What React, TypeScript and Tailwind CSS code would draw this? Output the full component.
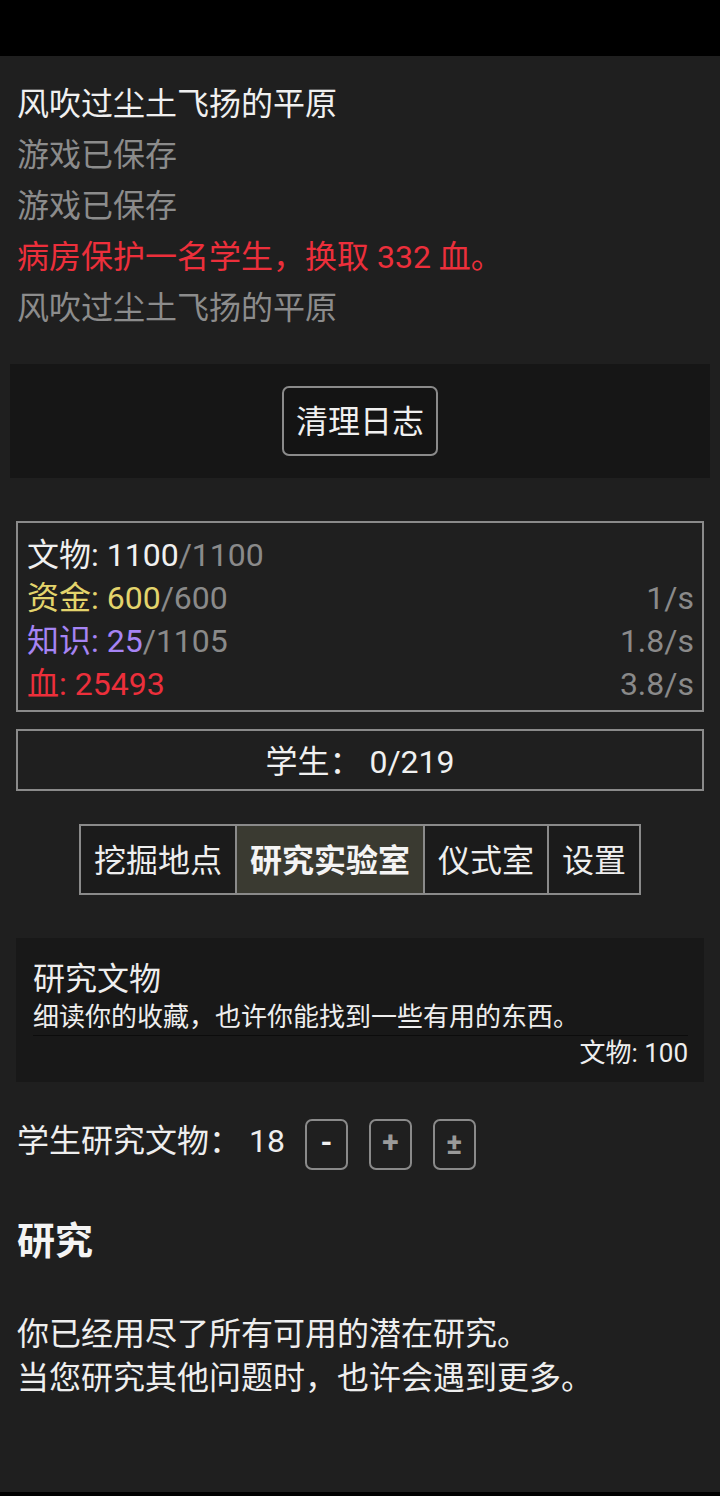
import React from "react";

const font = { fontFamily: 'Roboto, "Noto Sans CJK SC", "Noto Sans", sans-serif' };

export default function App() {
  return (
    <div className="flex h-[1496px] w-[720px] flex-col bg-black text-[#eeeeee]" style={font}>
      <div className="h-[56px] shrink-0 bg-black" />
      <div className="flex flex-1 flex-col bg-[#1f1f1f]">
        {/* log */}
        <div className="px-[17px] pt-[23px] text-[32px] leading-[51px]">
          <div className="text-[#f0f0f0]">风吹过尘土飞扬的平原</div>
          <div className="text-[#8c8c8c]">游戏已保存</div>
          <div className="text-[#8c8c8c]">游戏已保存</div>
          <div className="text-[#ec2f3b]">病房保护一名学生，换取 332 血。</div>
          <div className="text-[#8c8c8c]">风吹过尘土飞扬的平原</div>
        </div>

        {/* clear log */}
        <div className="mx-[10px] mt-[30px] flex h-[114px] items-center justify-center bg-[#161616]">
          <button className="flex h-[70px] w-[156px] items-center justify-center rounded-[7px] border-2 border-[#8a8a8a] bg-[#141414] pt-[2px] text-[32px] text-[#f0f0f0]">
            清理日志
          </button>
        </div>

        {/* resources */}
        <div className="mx-[16px] mt-[43px] border-2 border-[#8a8a8a] pb-[4px] pl-[9px] pr-[8px] pt-[11px] text-[32px] leading-[43px]">
          <div className="flex justify-between">
            <span>
              <span className="text-[#f0f0f0]">文物: 1100</span>
              <span className="text-[#8a8a8a]">/1100</span>
            </span>
            <span />
          </div>
          <div className="flex justify-between">
            <span>
              <span className="text-[#e3d46c]">资金: 600</span>
              <span className="text-[#8a8a8a]">/600</span>
            </span>
            <span className="text-[#8a8a8a]">1/s</span>
          </div>
          <div className="flex justify-between">
            <span>
              <span className="text-[#a684f4]">知识: 25</span>
              <span className="text-[#8a8a8a]">/1105</span>
            </span>
            <span className="text-[#8a8a8a]">1.8/s</span>
          </div>
          <div className="flex justify-between">
            <span className="text-[#ec2f3b]">血: 25493</span>
            <span className="text-[#8a8a8a]">3.8/s</span>
          </div>
        </div>

        {/* students */}
        <div className="mx-[16px] mt-[17px] flex h-[62px] items-center justify-center border-2 border-[#8a8a8a] pt-[4px] text-[32px] text-[#f0f0f0]">
          学生：&nbsp;0/219
        </div>

        {/* tabs */}
        <div className="mt-[33px] flex justify-center">
          <div className="flex h-[71px]">
            <div className="flex items-center border-2 border-[#8a8a8a] bg-[#1b1b1b] px-[13px] pt-[2px] text-[32px] text-[#eeeeee]">
              挖掘地点
            </div>
            <div className="-ml-[2px] flex items-center border-2 border-[#8a8a8a] bg-[#3a3a31] px-[13px] pt-[2px] text-[32px] font-bold text-[#f4f4f4]">
              研究实验室
            </div>
            <div className="-ml-[2px] flex items-center border-2 border-[#8a8a8a] bg-[#1b1b1b] px-[13px] pt-[2px] text-[32px] text-[#eeeeee]">
              仪式室
            </div>
            <div className="-ml-[2px] flex items-center border-2 border-[#8a8a8a] bg-[#1b1b1b] px-[13px] pt-[2px] text-[32px] text-[#eeeeee]">
              设置
            </div>
          </div>
        </div>

        {/* research card */}
        <div className="mx-[16px] mt-[43px] bg-[#181818] pb-[14px] pl-[17px] pr-[16px] pt-[21px]">
          <div className="text-[32px] leading-[40px] text-[#eeeeee]">研究文物</div>
          <div className="text-[26px] leading-[36px] text-[#eeeeee]">细读你的收藏，也许你能找到一些有用的东西。</div>
          <div className="h-px bg-[#0c0c0c]" />
          <div className="mt-[2px] text-right text-[26px] leading-[30px] text-[#eeeeee]">文物: 100</div>
        </div>

        {/* students researching */}
        <div className="mt-[37px] flex items-start px-[17px]">
          <span className="text-[32px] leading-[44px] text-[#eeeeee]">学生研究文物：&nbsp;18</span>
          <div className="ml-[20px] flex gap-[21px]">
            <button className="flex h-[51px] w-[43px] items-center justify-center rounded-[7px] border-2 border-[#8a8a8a] pb-[6px] text-[30px] font-bold leading-none text-[#f0f0f0]">
              -
            </button>
            <button className="flex h-[51px] w-[43px] items-center justify-center rounded-[7px] border-2 border-[#8a8a8a] pb-[6px] text-[30px] font-bold leading-none text-[#9a9a9a]">
              +
            </button>
            <button className="flex h-[51px] w-[43px] items-center justify-center rounded-[7px] border-2 border-[#8a8a8a] pb-[2px] text-[30px] font-bold leading-none text-[#9a9a9a]">
              ±
            </button>
          </div>
        </div>

        {/* research heading */}
        <div className="mt-[47px] px-[17px] text-[38px] font-bold leading-[48px] text-[#f4f4f4]">研究</div>

        <div className="mt-[47px] px-[17px] text-[32px] leading-[44px] text-[#eeeeee]">
          <div>你已经用尽了所有可用的潜在研究。</div>
          <div>当您研究其他问题时，也许会遇到更多。</div>
        </div>
      </div>
      <div className="h-[4px] shrink-0 bg-black" />
    </div>
  );
}
